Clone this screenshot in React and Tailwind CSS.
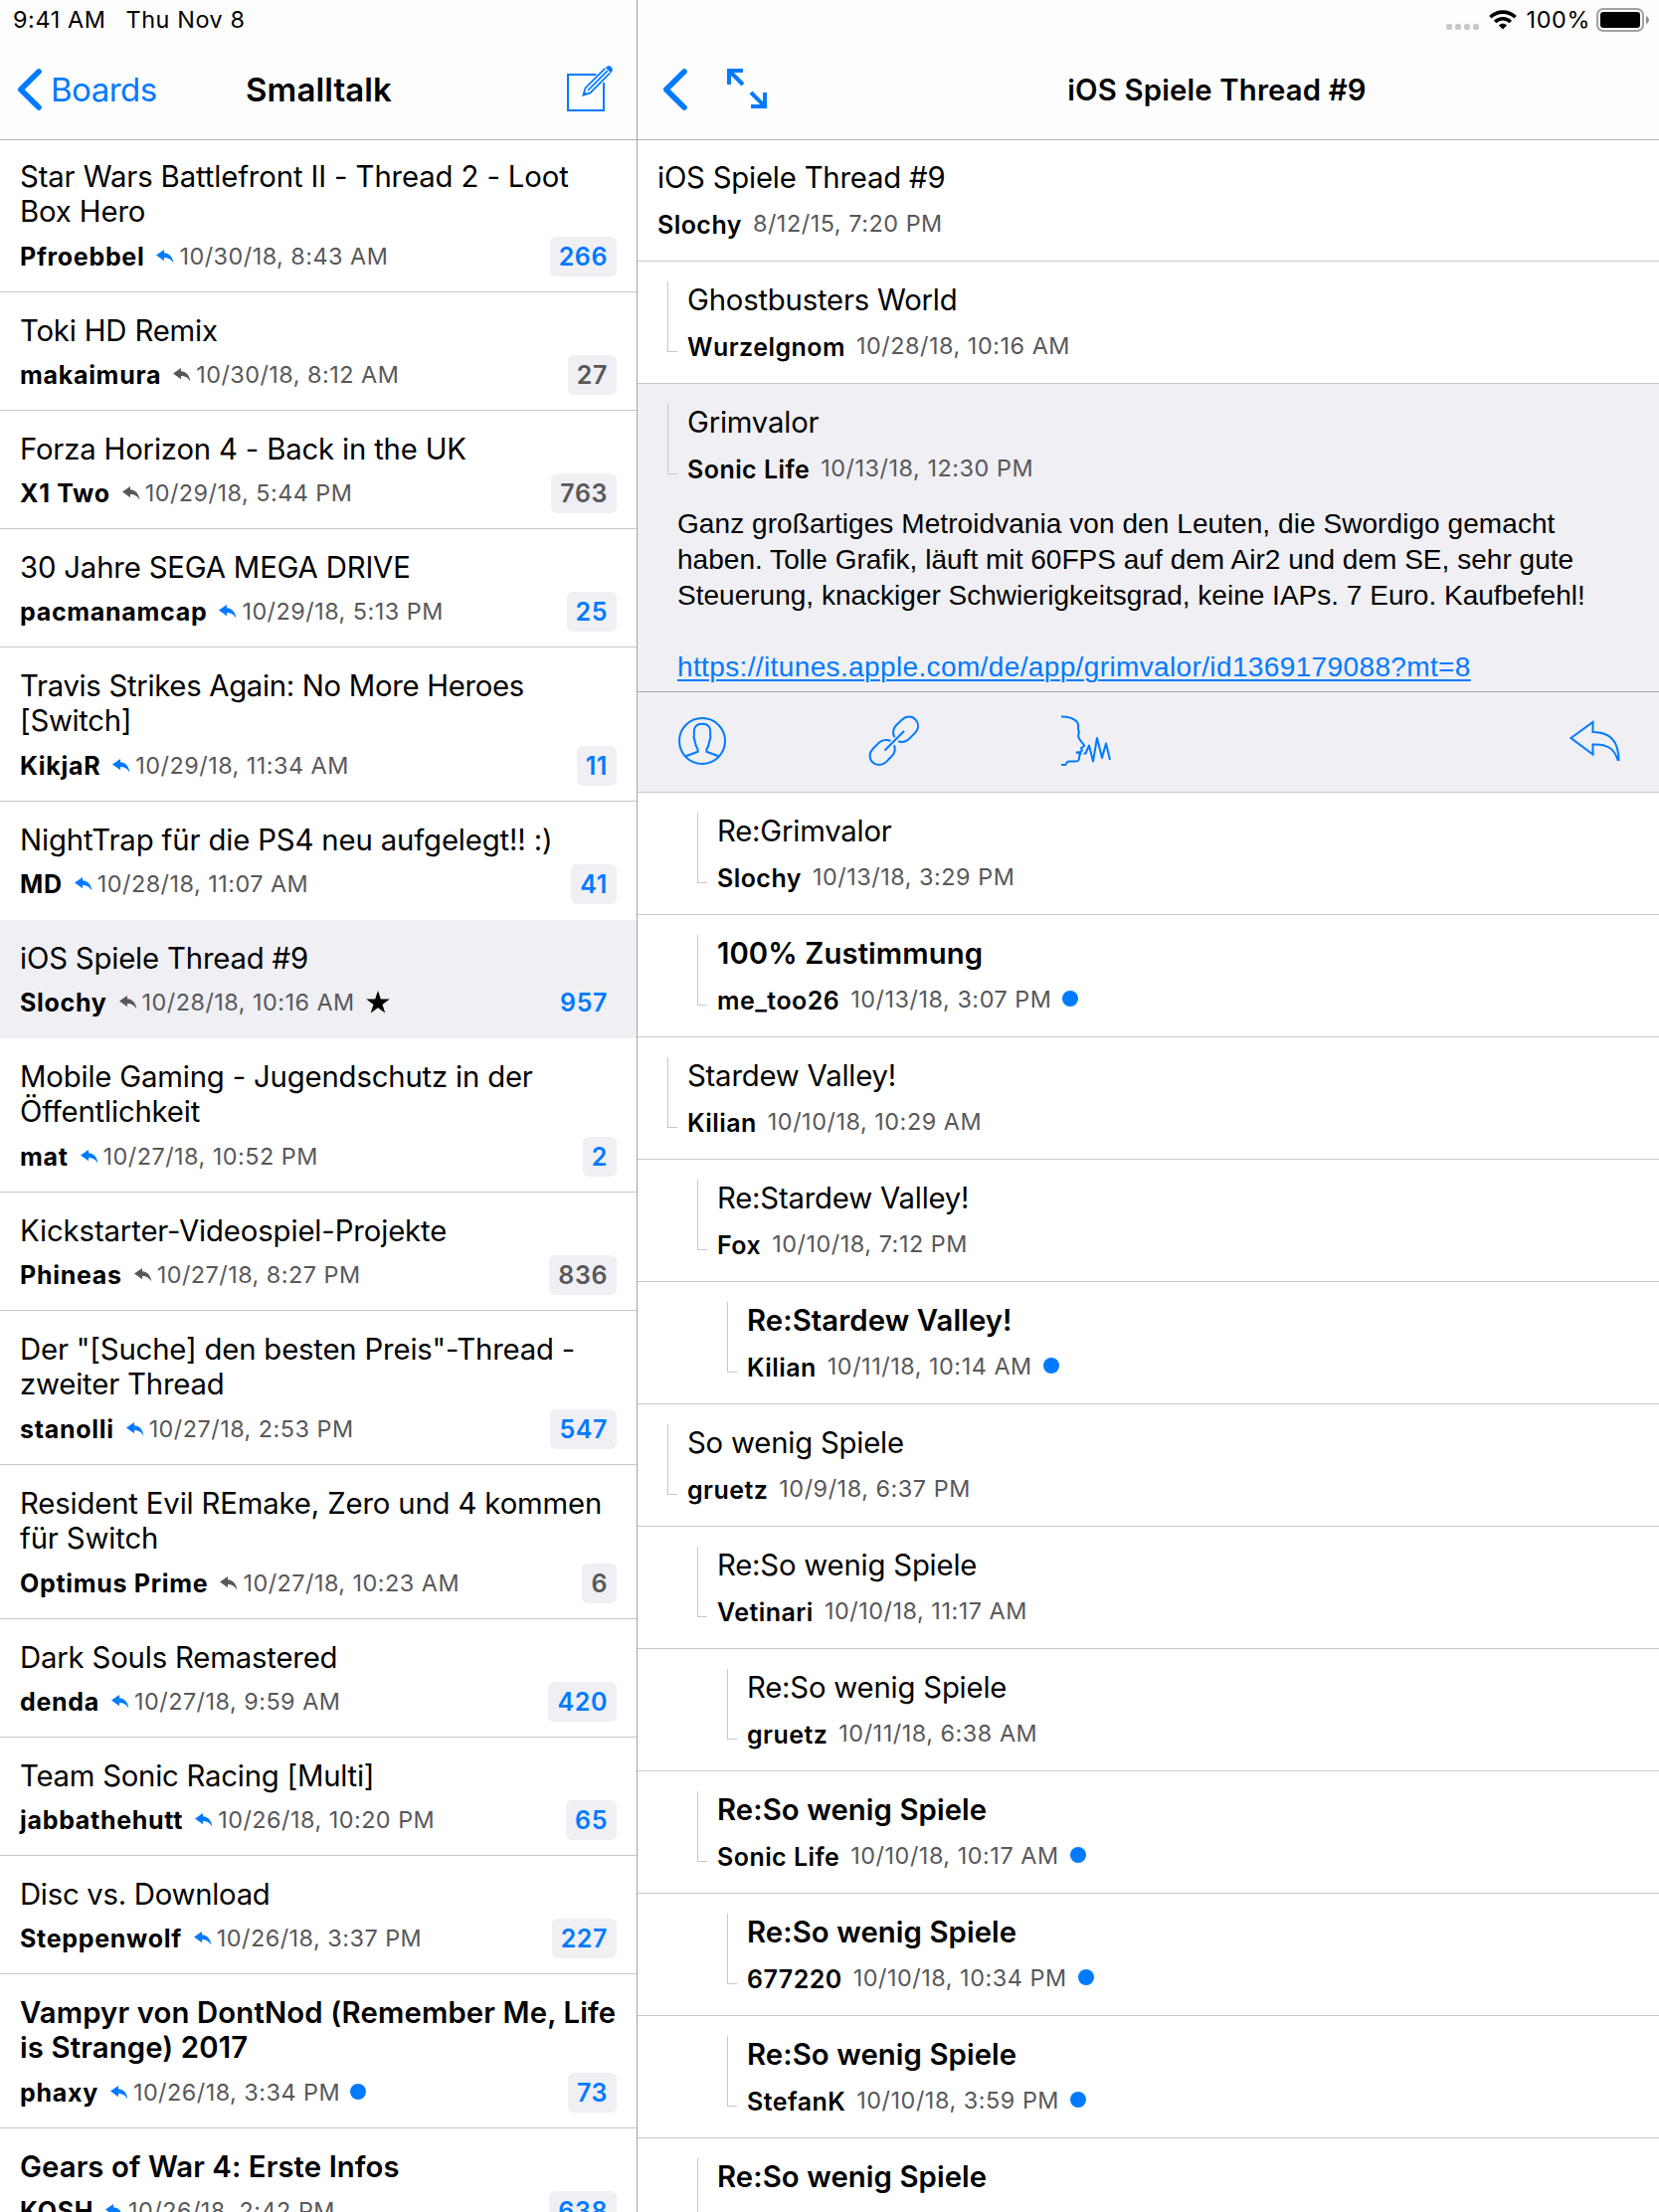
import React from "react";

const threads = [
  { t: ["Star Wars Battlefront II - Thread 2 - Loot", "Box Hero"], a: "Pfroebbel", d: "10/30/18, 8:43 AM", n: 266, own: true, tracking: "tracking-[-0.12px]" },
  { t: ["Toki HD Remix"], a: "makaimura", d: "10/30/18, 8:12 AM", n: 27 },
  { t: ["Forza Horizon 4 - Back in the UK"], a: "X1 Two", d: "10/29/18, 5:44 PM", n: 763 },
  { t: ["30 Jahre SEGA MEGA DRIVE"], a: "pacmanamcap", d: "10/29/18, 5:13 PM", n: 25, own: true },
  { t: ["Travis Strikes Again: No More Heroes", "[Switch]"], a: "KikjaR", d: "10/29/18, 11:34 AM", n: 11, own: true, tracking: "tracking-[-0.3px]" },
  { t: ["NightTrap für die PS4 neu aufgelegt!! :)"], a: "MD", d: "10/28/18, 11:07 AM", n: 41, own: true, noLine: true, tracking: "tracking-[-0.14px]" },
  { t: ["iOS Spiele Thread #9"], a: "Slochy", d: "10/28/18, 10:16 AM", n: 957, blue: true, star: true, selected: true, noLine: true },
  { t: ["Mobile Gaming - Jugendschutz in der", "Öffentlichkeit"], a: "mat", d: "10/27/18, 10:52 PM", n: 2, own: true },
  { t: ["Kickstarter-Videospiel-Projekte"], a: "Phineas", d: "10/27/18, 8:27 PM", n: 836, tracking: "tracking-[-0.12px]" },
  { t: ['Der "[Suche] den besten Preis"-Thread -', "zweiter Thread"], a: "stanolli", d: "10/27/18, 2:53 PM", n: 547, own: true },
  { t: ["Resident Evil REmake, Zero und 4 kommen", "für Switch"], a: "Optimus Prime", d: "10/27/18, 10:23 AM", n: 6, tracking: "tracking-[-0.15px]" },
  { t: ["Dark Souls Remastered"], a: "denda", d: "10/27/18, 9:59 AM", n: 420, own: true },
  { t: ["Team Sonic Racing [Multi]"], a: "jabbathehutt", d: "10/26/18, 10:20 PM", n: 65, own: true, tracking: "tracking-[-0.23px]" },
  { t: ["Disc vs. Download"], a: "Steppenwolf", d: "10/26/18, 3:37 PM", n: 227, own: true, tracking: "tracking-[-0.27px]" },
  { t: ["Vampyr von DontNod (Remember Me, Life", "is Strange) 2017"], a: "phaxy", d: "10/26/18, 3:34 PM", n: 73, own: true, unread: true, dot: true, tracking: "tracking-[0.13px]" },
  { t: ["Gears of War 4: Erste Infos"], a: "KOSH", d: "10/26/18, 2:42 PM", n: 638, own: true, unread: true },
];

const before = [
  { l: 0, t: "iOS Spiele Thread #9", a: "Slochy", d: "8/12/15, 7:20 PM" },
  { l: 1, t: "Ghostbusters World", a: "Wurzelgnom", d: "10/28/18, 10:16 AM" },
];

const after = [
  { l: 2, t: "Re:Grimvalor", a: "Slochy", d: "10/13/18, 3:29 PM" },
  { l: 2, t: "100% Zustimmung", a: "me_too26", d: "10/13/18, 3:07 PM", unread: true },
  { l: 1, t: "Stardew Valley!", a: "Kilian", d: "10/10/18, 10:29 AM" },
  { l: 2, t: "Re:Stardew Valley!", a: "Fox", d: "10/10/18, 7:12 PM" },
  { l: 3, t: "Re:Stardew Valley!", a: "Kilian", d: "10/11/18, 10:14 AM", unread: true },
  { l: 1, t: "So wenig Spiele", a: "gruetz", d: "10/9/18, 6:37 PM" },
  { l: 2, t: "Re:So wenig Spiele", a: "Vetinari", d: "10/10/18, 11:17 AM" },
  { l: 3, t: "Re:So wenig Spiele", a: "gruetz", d: "10/11/18, 6:38 AM" },
  { l: 2, t: "Re:So wenig Spiele", a: "Sonic Life", d: "10/10/18, 10:17 AM", unread: true },
  { l: 3, t: "Re:So wenig Spiele", a: "677220", d: "10/10/18, 10:34 PM", unread: true },
  { l: 3, t: "Re:So wenig Spiele", a: "StefanK", d: "10/10/18, 3:59 PM", unread: true },
  { l: 2, t: "Re:So wenig Spiele", unread: true },
];

const indent = ["pl-0", "pl-[30px]", "pl-[60px]", "pl-[90px]"];

function Chevron() {
  return (
    <svg width="26" height="42" viewBox="0 0 26 42" fill="none" stroke="#007aff" strokeWidth="5.6" strokeLinecap="round" strokeLinejoin="round">
      <path d="M22 3 L3.8 21 L22 39" />
    </svg>
  );
}

function ReplySmall({ color }) {
  return (
    <svg className={`ml-[12px] mr-[5px] mt-[-1px] shrink-0 ${color}`} width="18" height="14" viewBox="0 0 18 14" fill="currentColor">
      <path d="M0 5.6 L8 0 V3.2 C13 3.4 16.5 7 17.4 13.6 C14.8 9.4 12 8 8 8 V11.2 Z" />
    </svg>
  );
}

function Star() {
  return (
    <svg className="ml-[11px] mt-[-2px] shrink-0" width="24" height="23" viewBox="0 0 24 23" fill="#000">
      <path d="M12 0 L14.8 8.6 H23.8 L16.5 13.9 L19.3 22.5 L12 17.2 L4.7 22.5 L7.5 13.9 L0.2 8.6 H9.2 Z" />
    </svg>
  );
}

function Thread({ item, first }) {
  const tall = item.t.length > 1;
  const height = first ? "h-[153px] pt-[19px]" : tall ? "h-[155px] pt-[21px]" : "h-[119px] pt-[21px]";
  const line = item.noLine ? "" : "border-b border-[#c8c7cc]";
  const badge = item.own || item.blue ? "text-[#007aff]" : "text-[#58585a]";
  const tracking = item.tracking || (item.unread ? "tracking-[0.09px]" : "tracking-[-0.17px]");
  return (
    <div className={`flex shrink-0 flex-col pl-[20px] pr-[20px] ${height} ${line} ${item.selected ? "bg-[#efeff4]" : ""}`}>
      <div className={`whitespace-nowrap text-[29.3px] leading-[35px] ${item.unread ? "font-semibold" : ""} ${tracking}`}>
        {item.t.map((x) => (
          <div key={x}>{x}</div>
        ))}
      </div>
      <div className={`flex h-[40px] shrink-0 items-center whitespace-nowrap ${tall ? "mt-[8px]" : "mt-[7px]"}`}>
        <span className="text-[25px] font-bold leading-[40px] tracking-[0.7px]">{item.a}</span>
        <ReplySmall color={item.own ? "text-[#007aff]" : "text-[#58585a]"} />
        <span className="text-[23.4px] leading-[40px] tracking-[0.48px] text-[#58585a]">{item.d}</span>
        {item.star && <Star />}
        {item.dot && <span className="ml-[10px] mt-[-2px] size-[16px] rounded-full bg-[#007aff]" />}
        <span className={`ml-auto h-[40px] rounded-[6px] bg-[#efeff4] pl-[9px] pr-[9px] text-[25px] font-semibold leading-[41px] tracking-[0.6px] ${badge}`}>{item.n}</span>
      </div>
    </div>
  );
}

function PostHead({ item }) {
  return (
    <div className={`flex ${indent[item.l]}`}>
      {item.l > 0 && <div className="ml-[-20px] mr-[10px] h-[71px] w-[10px] border-b border-l border-[#c8c7cc]" />}
      <div className="whitespace-nowrap">
        <div className={`text-[29.3px] leading-[37px] ${item.unread ? "font-semibold tracking-[0.08px]" : "tracking-[-0.2px]"}`}>{item.t}</div>
        {item.a && (
          <div className="mt-[9px] flex h-[40px] items-center">
            <span className="text-[25px] font-semibold leading-[40px] tracking-[0.45px]">{item.a}</span>
            <span className="mt-[-3px] ml-[11px] text-[23.4px] leading-[40px] tracking-[0.53px] text-[#58585a]">{item.d}</span>
            {item.unread && <span className="mt-[-4px] ml-[11px] size-[16px] rounded-full bg-[#007aff]" />}
          </div>
        )}
      </div>
    </div>
  );
}

function Post({ item, first }) {
  return (
    <div className={`shrink-0 border-b border-[#c8c7cc] pl-[20px] ${first ? "h-[122px] pt-[19px]" : "h-[123px] pt-[20px]"}`}>
      <PostHead item={item} />
    </div>
  );
}

function StatusRight() {
  return (
    <div className="flex h-[40px] items-center justify-end pr-[10px]">
      <div className="mt-[14px] flex gap-[3px]">
        {[0, 1, 2, 3].map((i) => (
          <span key={i} className="size-[6px] rounded-[2px] bg-[#c8c8c8]" />
        ))}
      </div>
      <svg className="ml-[10px]" width="28" height="20" viewBox="0 0 28 20">
        <path d="M1.4 7.2 C8.4 0.4 19.6 0.4 26.6 7.2" fill="none" stroke="#000" strokeWidth="3.6" />
        <path d="M6.2 11.9 C10.6 7.6 17.4 7.6 21.8 11.9" fill="none" stroke="#000" strokeWidth="3.5" />
        <path d="M9.9 15.4 C12.3 13.1 15.7 13.1 18.1 15.4 L14 19.6 Z" />
      </svg>
      <span className="ml-[10px] text-[23.4px] leading-[40px] tracking-[0.6px]">100%</span>
      <div className="ml-[6px] flex h-[24px] w-[48px] items-center justify-center rounded-[7px] border-2 border-[#a3a3a3]">
        <div className="h-[16px] w-[40px] rounded-[3px] bg-black" />
      </div>
      <svg className="ml-[2px]" width="3" height="8" viewBox="0 0 3 8">
        <path d="M0 0 C3.8 1.6 3.8 6.4 0 8 Z" fill="#8a8a8a" />
      </svg>
    </div>
  );
}

function Toolbar() {
  return (
    <div className="flex h-[102px] items-center border-b border-t border-b-[#c8c7cc] border-t-[#a7a7ab] pb-[2px] pl-[40px] pr-[39px]">
      <svg width="50" height="50" viewBox="0 0 50 50" fill="none" stroke="#007aff" strokeWidth="2">
        <circle cx="25" cy="25" r="23" />
        <path d="M8.7 40.2 L20.6 35.8 V33.5 C18.2 29.5 17.8 27 17.4 24 C16.2 22 16.6 19.5 16.9 18.5 C16.1 11 19 7.8 25 7.8 C31 7.8 33.9 11 33.1 18.5 C33.4 19.5 33.8 22 32.6 24 C32.2 27 31.8 29.5 29.4 33.5 V35.8 L41.3 40.2" />
      </svg>
      <svg className="ml-[142px]" width="52" height="52" viewBox="0 0 52 52" fill="none" stroke="#007aff" strokeWidth="2">
        <path d="M26.5 22.3 C24 18.5 24.8 13.5 28 10.3 L34 4.5 C38.2 0.6 44 0.6 47.6 4.6 C51.2 8.6 50.8 13.6 47.2 17.6 L41.3 23.6 C38.3 26.8 34 27.6 30.3 26.2" />
        <path d="M22.5 26 C18.5 24 13.5 25 10.5 28 L4.5 34 C0.8 38 0.6 43.4 4.2 47.2 C7.9 51 13.5 51 17.4 47.6 L23.6 41.3 C26.8 38.2 27.4 34.2 26 30.3" />
        <path d="M16.5 35.5 L36 16" />
      </svg>
      <svg className="ml-[141px]" width="52" height="52" viewBox="0 0 52 52" fill="none" stroke="#007aff" strokeWidth="2" strokeLinejoin="round">
        <path d="M1 1.5 C8 1.5 14 3.5 17 7 C18.8 9.5 18 12 18 14 C20 17 17.5 19.5 18.5 22.5 C19.5 25.5 23 28.5 24 30.5 C24.3 32 21.5 32.3 21 33 L22 35.3 L20.5 37 L16.5 37.5 L20.5 38.8 C18 41 20 43 18.5 45.2 C17 47.6 10.5 46 7.5 46.8 C5.5 47.8 6.5 50 5 50 H1" />
        <path d="M23.5 38.5 H25.5 L29 30.5 L33 46.5 L37 23 L42 43 L46 28.5 L50 45" />
      </svg>
      <svg className="ml-auto" width="51" height="42" viewBox="0 0 51 42" fill="none" stroke="#007aff" strokeWidth="2">
        <path d="M1.5 18 L23.5 2 V12 C40 12 49.5 21 49.5 40 H48.5 C45 28.5 38 24 23.5 24.5 V34.5 Z" />
      </svg>
    </div>
  );
}

export default function App() {
  return (
    <div className="flex h-[2224px] w-[1668px] overflow-hidden bg-white font-['Inter',sans-serif] text-black">
      <div className="flex w-[640px] shrink-0 flex-col overflow-hidden">
        <div className="flex h-[141px] shrink-0 flex-col border-b border-[#b2b2b2] bg-[#fdfdfd]">
          <div className="flex h-[40px] items-center gap-[20px] pl-[13px] text-[23.4px] tracking-[0.6px]">
            <span>9:41 AM</span>
            <span>Thu Nov 8</span>
          </div>
          <div className="grid h-[100px] grid-cols-[1fr_auto_1fr] items-center pl-[17px] pr-[23px]">
            <div className="flex items-center gap-[8px] text-[33px] text-[#007aff]">
              <Chevron />
              <span className="mt-px tracking-[-0.5px]">Boards</span>
            </div>
            <div className="ml-[7px] mt-px text-[33px] font-semibold tracking-[0.1px]">Smalltalk</div>
            <svg className="mt-[-2px] justify-self-end" width="47" height="47" viewBox="0 0 47 47" fill="none" stroke="#007aff" strokeWidth="2">
              <path d="M29.5 9 H1 V45 H37 V17" />
              <path d="M38.3 2.8 L18.5 22.5 L16.4 29.6 L23.4 27.4 L43.3 7.4 M21 25 L40.8 5.1" strokeWidth="1.7" />
              <path d="M16 30 L17.2 25.4 L20.4 28.6 Z" fill="#007aff" stroke="none" />
              <path d="M38.8 2 C41 -0.4 43.5 0 44.8 1.4 C46.4 3 46.2 5.2 44.2 7.4 Z" fill="#007aff" stroke="none" />
            </svg>
          </div>
        </div>
        {threads.map((x, i) => (
          <Thread key={i} item={x} first={i === 0} />
        ))}
      </div>
      <div className="w-px shrink-0 bg-[#a3a3a7]" />
      <div className="flex flex-1 flex-col overflow-hidden">
        <div className="flex h-[141px] shrink-0 flex-col border-b border-[#b2b2b2] bg-[#fdfdfd]">
          <StatusRight />
          <div className="grid h-[100px] grid-cols-[1fr_auto_1fr] items-center px-[25px]">
            <div className="flex items-center">
              <Chevron />
              <svg className="ml-[39px] mt-[-2px]" width="40" height="40" viewBox="0 0 40 40" fill="none" stroke="#007aff" strokeWidth="4">
                <path d="M2 16 V2 H16 M3 3 L16 16 M38 24 V38 H24 M37 37 L24 24" />
              </svg>
            </div>
            <div className="ml-[138px] mt-px text-[29.3px] font-semibold tracking-[0.16px]">iOS Spiele Thread #9</div>
            <div />
          </div>
        </div>
        {before.map((x, i) => (
          <Post key={i} item={x} first={i === 0} />
        ))}
        <div className="shrink-0 bg-[#efeff4]">
          <div className="h-[309px] pl-[20px] pt-[20px]">
            <PostHead item={{ l: 1, t: "Grimvalor", a: "Sonic Life", d: "10/13/18, 12:30 PM" }} />
            <div className="ml-[20px] mt-[17px] whitespace-nowrap font-['Liberation_Sans',sans-serif] text-[28px] leading-[36px]">
              <div className="tracking-[0.07px]">Ganz großartiges Metroidvania von den Leuten, die Swordigo gemacht</div>
              <div className="tracking-[0.03px]">haben. Tolle Grafik, läuft mit 60FPS auf dem Air2 und dem SE, sehr gute</div>
              <div className="tracking-[0.01px]">Steuerung, knackiger Schwierigkeitsgrad, keine IAPs. 7 Euro. Kaufbefehl!</div>
              <div className="mt-[36px] tracking-[0.37px] text-[#007aff]">
                <span className="underline decoration-2 underline-offset-[3px]">https://itunes.apple.com/de/app/grimvalor/id1369179088?mt=8</span>
              </div>
            </div>
          </div>
          <Toolbar />
        </div>
        {after.map((x, i) => (
          <Post key={i} item={x} />
        ))}
      </div>
    </div>
  );
}
